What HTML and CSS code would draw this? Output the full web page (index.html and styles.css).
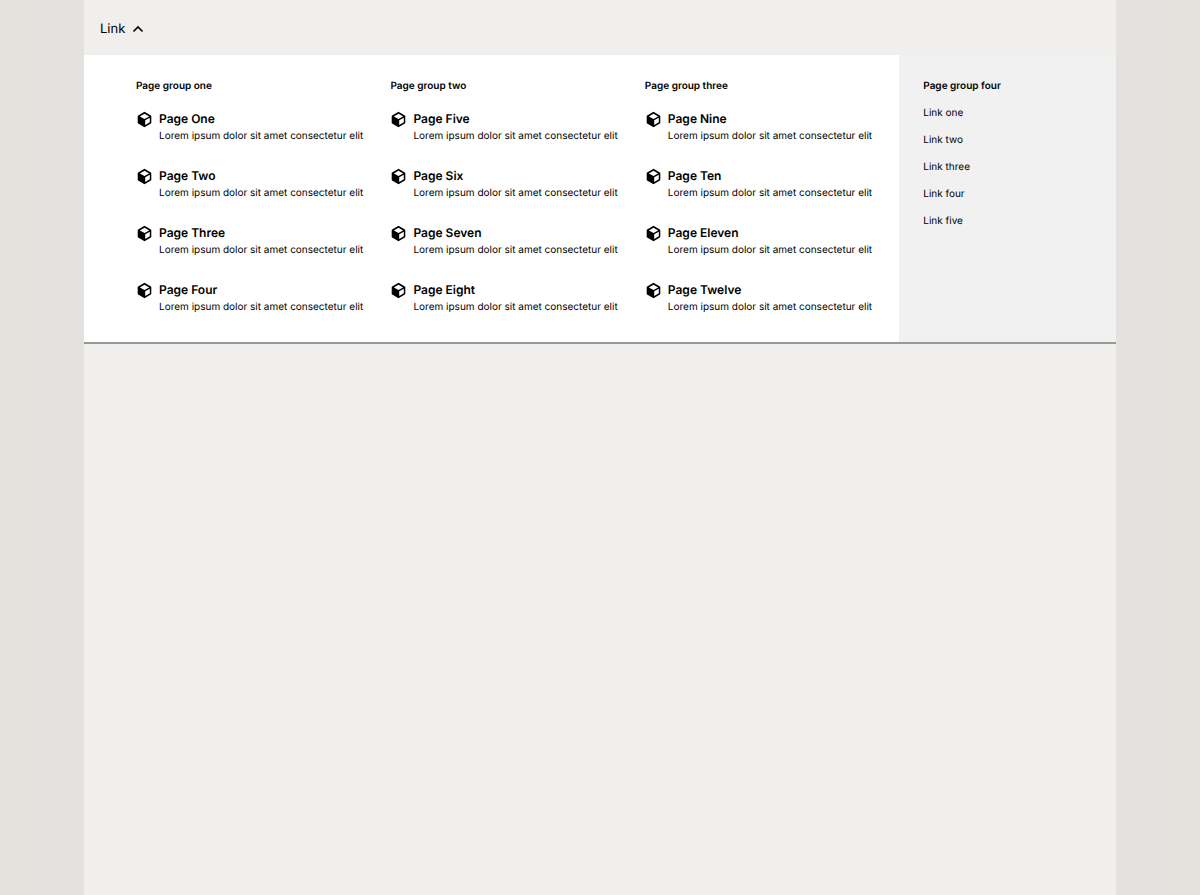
FILE: index.html
```
<!DOCTYPE html>
<html lang="en">
<head>
    <meta charset="UTF-8">
    <meta name="viewport" content="width=device-width, initial-scale=1.0">
    <title>Mega menu</title>
    <link rel="stylesheet" href="styles.css">
</head>
<body>
    <!-- shared cube icon -->
    <svg class="sprite" aria-hidden="true">
        <symbol id="cube" viewBox="0 0 24 24">
            <path fill="currentColor" fill-rule="evenodd" d="M11.400 1.400a1.200 1.200 0 0 1 1.200 0L21 6.300a1.200 1.200 0 0 1 .6 1v9.400a1.200 1.200 0 0 1-.6 1L12.600 22.600a1.200 1.200 0 0 1-1.200 0L3 17.700a1.200 1.200 0 0 1-.6-1V7.300a1.200 1.200 0 0 1 .6-1ZM12 3.800 5.400 7.600 12 11.400 18.600 7.600ZM19.500 9.400 13 13.100V19.600L19.500 15.900Z"/>
        </symbol>
    </svg>
    <div class="page">
        <nav>
            <div class="navbar">
                <button class="toggle" type="button" aria-expanded="true" aria-controls="menu">
                    Link
                    <svg class="chevron" viewBox="0 0 12 12" aria-hidden="true"><path d="M1.500 8.500 6 4l4.500 4.500"/></svg>
                </button>
            </div>
            <div class="menu" id="menu">
                <div class="groups">
                    <section class="group">
                        <h2>Page group one</h2>
                        <a class="item" href="#">
                            <svg class="icon"><use href="#cube"/></svg>
                            <div><h3>Page One</h3><p>Lorem ipsum dolor sit amet consectetur elit</p></div>
                        </a>
                        <a class="item" href="#">
                            <svg class="icon"><use href="#cube"/></svg>
                            <div><h3>Page Two</h3><p>Lorem ipsum dolor sit amet consectetur elit</p></div>
                        </a>
                        <a class="item" href="#">
                            <svg class="icon"><use href="#cube"/></svg>
                            <div><h3>Page Three</h3><p>Lorem ipsum dolor sit amet consectetur elit</p></div>
                        </a>
                        <a class="item" href="#">
                            <svg class="icon"><use href="#cube"/></svg>
                            <div><h3>Page Four</h3><p>Lorem ipsum dolor sit amet consectetur elit</p></div>
                        </a>
                    </section>
                    <section class="group">
                        <h2>Page group two</h2>
                        <a class="item" href="#">
                            <svg class="icon"><use href="#cube"/></svg>
                            <div><h3>Page Five</h3><p>Lorem ipsum dolor sit amet consectetur elit</p></div>
                        </a>
                        <a class="item" href="#">
                            <svg class="icon"><use href="#cube"/></svg>
                            <div><h3>Page Six</h3><p>Lorem ipsum dolor sit amet consectetur elit</p></div>
                        </a>
                        <a class="item" href="#">
                            <svg class="icon"><use href="#cube"/></svg>
                            <div><h3>Page Seven</h3><p>Lorem ipsum dolor sit amet consectetur elit</p></div>
                        </a>
                        <a class="item" href="#">
                            <svg class="icon"><use href="#cube"/></svg>
                            <div><h3>Page Eight</h3><p>Lorem ipsum dolor sit amet consectetur elit</p></div>
                        </a>
                    </section>
                    <section class="group">
                        <h2>Page group three</h2>
                        <a class="item" href="#">
                            <svg class="icon"><use href="#cube"/></svg>
                            <div><h3>Page Nine</h3><p>Lorem ipsum dolor sit amet consectetur elit</p></div>
                        </a>
                        <a class="item" href="#">
                            <svg class="icon"><use href="#cube"/></svg>
                            <div><h3>Page Ten</h3><p>Lorem ipsum dolor sit amet consectetur elit</p></div>
                        </a>
                        <a class="item" href="#">
                            <svg class="icon"><use href="#cube"/></svg>
                            <div><h3>Page Eleven</h3><p>Lorem ipsum dolor sit amet consectetur elit</p></div>
                        </a>
                        <a class="item" href="#">
                            <svg class="icon"><use href="#cube"/></svg>
                            <div><h3>Page Twelve</h3><p>Lorem ipsum dolor sit amet consectetur elit</p></div>
                        </a>
                    </section>
                </div>
                <section class="side">
                    <h2>Page group four</h2>
                    <ul>
                        <li><a href="#">Link one</a></li>
                        <li><a href="#">Link two</a></li>
                        <li><a href="#">Link three</a></li>
                        <li><a href="#">Link four</a></li>
                        <li><a href="#">Link five</a></li>
                    </ul>
                </section>
            </div>
        </nav>
    </div>
</body>
</html>
```
FILE: styles.css
```
*{
    box-sizing: border-box;
    margin: 0;
    padding: 0;
}
body{
    font-family: Inter, "Liberation Sans", sans-serif;
    text-rendering: geometricPrecision;
    color: #000;
    background: linear-gradient(to right, #e2e1dc, #e3e2de 7%, #e3e2de 93%, #e2e1dc);
}
.sprite{
    display: none;
}
a{
    color: inherit;
    text-decoration: none;
}
.page{
    min-height: 100vh;
    margin: 0 7%;
    background-color: #f0efed;
}

/* top bar */
.navbar{
    display: flex;
    align-items: center;
    height: 55px;
    padding: 2px 16px 0;
}
.toggle{
    display: flex;
    align-items: center;
    gap: 7px;
    border: 0;
    background: none;
    color: inherit;
    font-family: inherit;
    text-rendering: inherit;
    font-size: 13px;
    line-height: 20px;
}
.chevron{
    width: 12px;
    height: 12px;
    fill: none;
    stroke: currentColor;
    stroke-width: 1.6;
}

/* open menu */
.menu{
    display: grid;
    grid-template-columns: 79% 21%;
    border-bottom: 2px solid #999896;
    background-color: #fff;
}
.groups{
    display: grid;
    grid-template-columns: repeat(3, minmax(0, 1fr));
    gap: 24px;
    padding: 23px 24px 13px 52px;
}
h2{
    font-size: 10px;
    font-weight: 600;
    line-height: 16px;
    margin-bottom: 7px;
}
.item{
    display: flex;
    gap: 6px;
    padding: 10px 0 12px;
    margin-bottom: 1px;
}
.icon{
    flex: none;
    width: 17px;
    height: 17px;
}
h3{
    font-size: 12px;
    font-weight: 600;
    line-height: 16px;
}
.item p{
    font-size: 10px;
    line-height: 18px;
    white-space: nowrap;
}
.side{
    padding: 23px 24px;
    background-color: #f1f1f1;
}
.side ul{
    list-style: none;
}
.side li{
    padding: 4px 0 7px;
    font-size: 10px;
    line-height: 16px;
}
```
